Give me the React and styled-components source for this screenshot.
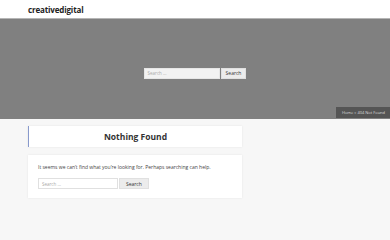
import React from "react";
import styled, { createGlobalStyle } from "styled-components";

const Global = createGlobalStyle`
  html, body { margin: 0; padding: 0; background: #f7f7f7; }
  body { font-family: "Open Sans", "Liberation Sans", sans-serif; width: 390px; height: 240px; overflow: hidden; }
`;

const Header = styled.header`
  height: 19px;
  background: #fff;
  display: flex;
  align-items: center;
  padding: 0 28px;
  border-bottom: 1px solid #b5b5b5;
  box-sizing: border-box;
`;

const Logo = styled.div`
  font-size: 8px;
  font-weight: 700;
  color: #222;
  letter-spacing: -0.15px;
`;

const Hero = styled.section`
  height: 100px;
  box-sizing: border-box;
  padding-top: 8px;
  background: #808080;
  display: flex;
  align-items: center;
  justify-content: center;
  position: relative;
`;

const SearchForm = styled.form`
  display: flex;
  gap: ${(p) => p.$gap || 0}px;
  margin: 0;
`;

const Input = styled.div`
  width: ${(p) => p.$w}px;
  height: ${(p) => p.$h}px;
  background: ${(p) => p.$bg};
  border: 1px solid ${(p) => p.$border};
  box-sizing: border-box;
  font-size: 4.5px;
  color: #aaa;
  display: flex;
  align-items: center;
  padding-left: 3px;
`;

const Button = styled.div`
  height: ${(p) => p.$h}px;
  padding: 0 ${(p) => p.$px}px;
  background: ${(p) => p.$bg};
  border: 1px solid ${(p) => p.$border};
  box-sizing: border-box;
  font-size: 5px;
  color: #333;
  display: flex;
  align-items: center;
`;

const Breadcrumb = styled.div`
  position: absolute;
  right: 0;
  bottom: 1px;
  background: #555;
  color: #ddd;
  font-size: 4px;
  padding: 0 5px 0 6px;
  height: 11px;
  display: flex;
  align-items: center;
`;

const Main = styled.main`
  padding: 7px 28px 0;
  width: 214px;
  display: flex;
  flex-direction: column;
  gap: 8px;
`;

const TitleCard = styled.div`
  height: 21px;
  background: #fff;
  border-left: 1px solid #8899cc;
  box-shadow: 0 0 2px rgba(0,0,0,0.08);
  display: flex;
  align-items: center;
  justify-content: center;
`;

const Title = styled.h1`
  margin: 0;
  font-size: 8.5px;
  font-weight: 700;
  color: #333;
`;

const ContentCard = styled.div`
  background: #fff;
  box-shadow: 0 0 2px rgba(0,0,0,0.08);
  padding: 9px 10px 9px;
  display: flex;
  flex-direction: column;
  gap: 8px;
`;

const Text = styled.p`
  margin: 0;
  font-size: 5px;
  color: #444;
`;

export default function App() {
  return (
    <>
      <Global />
      <Header>
        <Logo>creativedigital</Logo>
      </Header>
      <Hero>
        <SearchForm $gap={1}>
          <Input $w={76} $h={11} $bg="#f2f2f2" $border="#e6e6e6">Search …</Input>
          <Button $h={11} $px={4} $bg="#ececec" $border="#e0e0e0">Search</Button>
        </SearchForm>
        <Breadcrumb>Home » 404 Not Found</Breadcrumb>
      </Hero>
      <Main>
        <TitleCard>
          <Title>Nothing Found</Title>
        </TitleCard>
        <ContentCard>
          <Text>It seems we can’t find what you’re looking for. Perhaps searching can help.</Text>
          <SearchForm $gap={1}>
            <Input $w={80} $h={11} $bg="#fff" $border="#e0e0e0">Search …</Input>
            <Button $h={11} $px={6} $bg="#ececec" $border="#e0e0e0">Search</Button>
          </SearchForm>
        </ContentCard>
      </Main>
    </>
  );
}
